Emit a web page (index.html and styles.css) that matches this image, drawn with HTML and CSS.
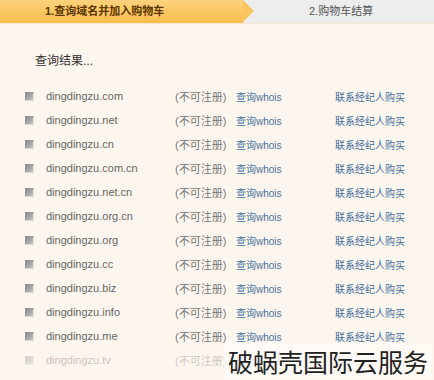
FILE: index.html
```html
<!DOCTYPE html>
<html lang="zh-CN">

<head>
    <meta charset="UTF-8">
    <meta name="viewport" content="width=device-width, initial-scale=1.0">
    <title>查询域名</title>
    <link rel="stylesheet" href="styles.css">
</head>

<body>
    <div class="steps">
        <div class="step active">1.查询域名并加入购物车</div>
        <div class="step">2.购物车结算</div>
    </div>

    <div class="title">查询结果...</div>

    <div class="results">
        <div class="row"><span class="box"></span><span class="domain">dingdingzu.com</span><span class="state">(不可注册)</span><a class="whois">查询whois</a><a class="buy">联系经纪人购买</a></div>
        <div class="row"><span class="box"></span><span class="domain">dingdingzu.net</span><span class="state">(不可注册)</span><a class="whois">查询whois</a><a class="buy">联系经纪人购买</a></div>
        <div class="row"><span class="box"></span><span class="domain">dingdingzu.cn</span><span class="state">(不可注册)</span><a class="whois">查询whois</a><a class="buy">联系经纪人购买</a></div>
        <div class="row"><span class="box"></span><span class="domain">dingdingzu.com.cn</span><span class="state">(不可注册)</span><a class="whois">查询whois</a><a class="buy">联系经纪人购买</a></div>
        <div class="row"><span class="box"></span><span class="domain">dingdingzu.net.cn</span><span class="state">(不可注册)</span><a class="whois">查询whois</a><a class="buy">联系经纪人购买</a></div>
        <div class="row"><span class="box"></span><span class="domain">dingdingzu.org.cn</span><span class="state">(不可注册)</span><a class="whois">查询whois</a><a class="buy">联系经纪人购买</a></div>
        <div class="row"><span class="box"></span><span class="domain">dingdingzu.org</span><span class="state">(不可注册)</span><a class="whois">查询whois</a><a class="buy">联系经纪人购买</a></div>
        <div class="row"><span class="box"></span><span class="domain">dingdingzu.cc</span><span class="state">(不可注册)</span><a class="whois">查询whois</a><a class="buy">联系经纪人购买</a></div>
        <div class="row"><span class="box"></span><span class="domain">dingdingzu.biz</span><span class="state">(不可注册)</span><a class="whois">查询whois</a><a class="buy">联系经纪人购买</a></div>
        <div class="row"><span class="box"></span><span class="domain">dingdingzu.info</span><span class="state">(不可注册)</span><a class="whois">查询whois</a><a class="buy">联系经纪人购买</a></div>
        <div class="row"><span class="box"></span><span class="domain">dingdingzu.me</span><span class="state">(不可注册)</span><a class="whois">查询whois</a><a class="buy">联系经纪人购买</a></div>
        <div class="row faded"><span class="box"></span><span class="domain">dingdingzu.tv</span><span class="state">(不可注册)</span><a class="whois">查询whois</a><a class="buy">联系经纪人购买</a></div>
    </div>

    <div class="watermark">破蜗壳国际云服务</div>
</body>

</html>
```

FILE: styles.css
```css
body {
    margin: 0;
    background-color: #fdf6ee;
    font-family: "Liberation Sans", "Noto Sans CJK SC", sans-serif;
    height: 380px;
    overflow: hidden;
    position: relative;
}

.steps {
    display: flex;
    height: 23px;
    background-color: #ededed;
    border-bottom: 1px solid #f3e6d4;
}

.step {
    font-size: 11px;
    line-height: 23px;
    color: #555;
    padding-left: 66px;
}

.step.active {
    position: relative;
    width: 198px;
    padding-left: 45px;
    background: linear-gradient(#fdd27c, #f9bd4c);
    color: #5a3600;
    font-weight: bold;
}

/* arrow tip */
.step.active::after {
    content: "";
    position: absolute;
    left: 243px;
    top: 0;
    border-top: 11.5px solid transparent;
    border-bottom: 11.5px solid transparent;
    border-left: 11px solid #fac55e;
}

.title {
    font-size: 12px;
    color: #333;
    margin: 28px 0 0 35px;
    line-height: 18px;
}

.results {
    margin-top: 14px;
}

.row {
    display: grid;
    grid-template-columns: 21px 129px 61px 99px auto;
    align-items: center;
    height: 24px;
    padding-left: 25px;
}

.box {
    width: 7px;
    height: 7px;
    background: linear-gradient(135deg, #8a8a8a, #c6c6c6);
    border: 1px solid #9a9a9a;
    border-right-color: #ddd;
    border-bottom-color: #ddd;
}

.domain {
    font-size: 11px;
    color: #666;
}

.state {
    font-size: 11px;
    color: #777;
}

.whois,
.buy {
    font-size: 10px;
    color: #3f719e;
}

.faded {
    opacity: 0.35;
}

.watermark {
    position: absolute;
    left: 224px;
    top: 343px;
    padding: 0 4px;
    font-family: "Noto Sans CJK SC", sans-serif;
    font-size: 25px;
    line-height: 36px;
    color: #222;
    background: linear-gradient(90deg, rgba(255, 255, 255, 0.6), rgba(255, 250, 244, 0.9));
}
```
